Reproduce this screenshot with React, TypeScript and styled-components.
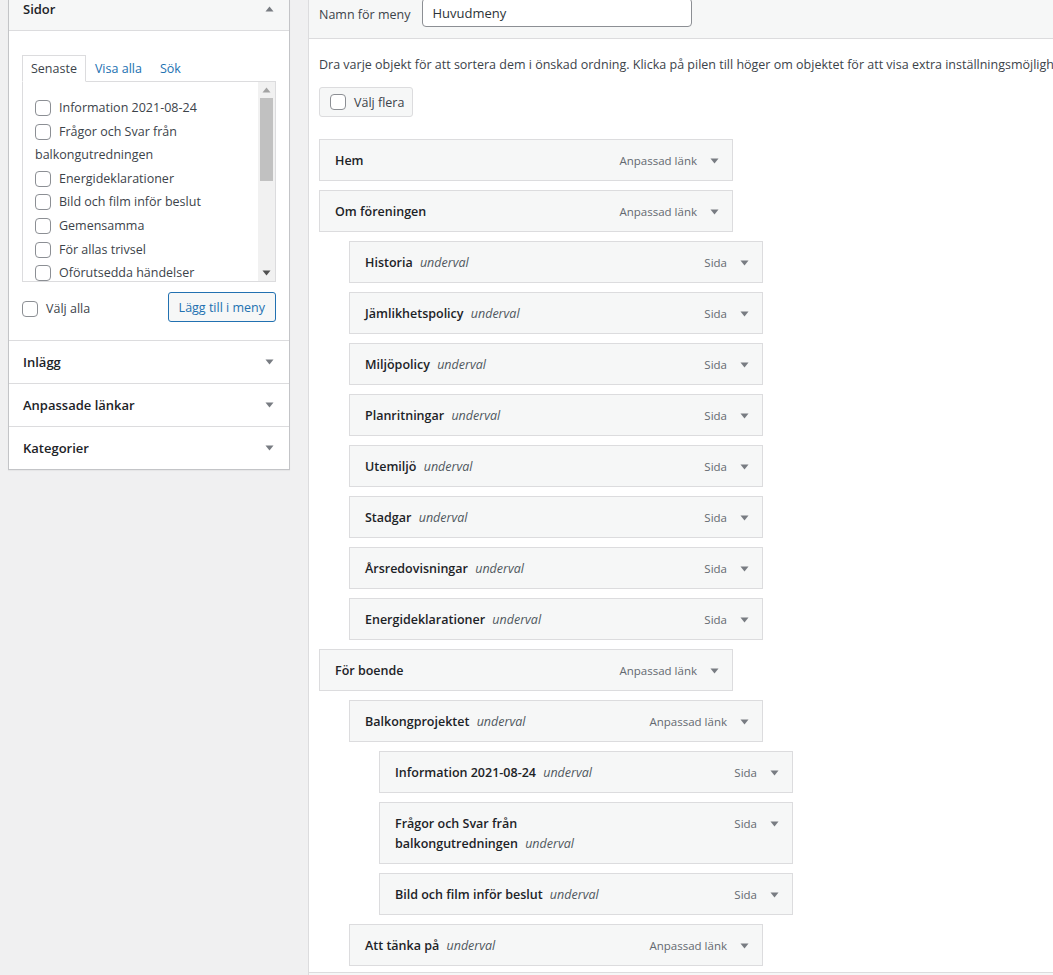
import React from "react";
import styled, { createGlobalStyle } from "styled-components";

const FONT = `"Open Sans", "Noto Sans", "Liberation Sans", sans-serif`;

const Global = createGlobalStyle`
  html, body { margin: 0; padding: 0; background: #f0f0f1; overflow: hidden; }
  body { font-family: ${FONT}; font-size: 12.5px; color: #3c434a; }
  * { box-sizing: border-box; }
`;

const Page = styled.div`
  display: flex;
  align-items: stretch;
  gap: 18px;
  padding-left: 8px;
  width: 1500px;
  min-height: 975px;
`;

const Sidebar = styled.div`
  flex: 0 0 282px;
  align-self: flex-start;
  background: #fff;
  border: 1px solid #c3c4c7;
  border-top: none;
  box-shadow: 0 1px 1px rgba(0, 0, 0, 0.04);
`;

const SectionHead = styled.div<{ $open?: boolean; $cut?: boolean }>`
  display: flex;
  align-items: ${(p) => (p.$cut ? "flex-start" : "center")};
  justify-content: space-between;
  height: ${(p) => (p.$cut ? 31 : 43)}px;
  padding: 0 14px;
  line-height: 18px;
  font-size: 13px;
  font-weight: 600;
  color: #1d2327;
  background: ${(p) => (p.$open ? "#f6f7f7" : "#fff")};
  border-top: ${(p) => (p.$cut ? "none" : "1px solid #dcdcde")};
  border-bottom: ${(p) => (p.$open ? "1px solid #dcdcde" : "none")};
`;

const ArrowBox = styled.span<{ $w: number }>`
  flex: 0 0 ${(p) => p.$w}px;
  height: 18px;
  display: flex;
  align-items: center;
  justify-content: center;
`;

const SectionBody = styled.div`
  padding: 24px 13px 18px;
`;

const Tabs = styled.div`
  display: flex;
  align-items: flex-end;
`;

const Tab = styled.span<{ $active?: boolean }>`
  position: relative;
  z-index: 1;
  padding: 4px 8px 3px;
  line-height: 18px;
  margin-bottom: -1px;
  color: ${(p) => (p.$active ? "#3c434a" : "#2271b1")};
  background: ${(p) => (p.$active ? "#fff" : "transparent")};
  border: 1px solid ${(p) => (p.$active ? "#dcdcde" : "transparent")};
  border-bottom-color: ${(p) => (p.$active ? "#fff" : "transparent")};
`;

const ListBox = styled.div`
  display: flex;
  height: 201px;
  border: 1px solid #dcdcde;
  background: #fff;
`;

const ListItems = styled.ul`
  flex: 1;
  margin: 0;
  list-style: none;
  overflow: hidden;
  padding: 14px 10px 0 12px;
  line-height: 23.6px;
`;

const ListItem = styled.li`
  margin: 0;
`;

const Check = styled.span`
  display: inline-block;
  width: 16px;
  height: 16px;
  border: 1px solid #8c8f94;
  border-radius: 4px;
  background: #fff;
  vertical-align: -4px;
  margin-right: 8px;
`;

const ScrollBar = styled.div`
  flex: 0 0 17px;
  display: flex;
  flex-direction: column;
  background: #f1f1f1;
`;

const ScrollBtn = styled.div`
  flex: 0 0 16px;
  display: flex;
  align-items: center;
  justify-content: center;
`;

const ScrollTrack = styled.div`
  flex: 1;
  padding: 0 2px;
`;

const Thumb = styled.div`
  height: 83px;
  background: #c1c1c1;
`;

const Actions = styled.div`
  display: flex;
  align-items: center;
  justify-content: space-between;
  margin-top: 10px;
`;

const CheckLabel = styled.label`
  display: flex;
  align-items: center;
  gap: 8px;
  margin-top: 3px;
  color: #3c434a;
`;

const PlainCheck = styled.span`
  width: 16px;
  height: 16px;
  border: 1px solid #8c8f94;
  border-radius: 4px;
  background: #fff;
`;

const AddButton = styled.button`
  height: 30px;
  padding: 0 10px;
  font-family: ${FONT};
  font-size: 12.5px;
  color: #2271b1;
  background: #f6f7f7;
  border: 1px solid #2271b1;
  border-radius: 3px;
`;

const Main = styled.div`
  flex: 0 0 1100px;
  display: flex;
  flex-direction: column;
  background: #fff;
  border-left: 1px solid #dcdcde;
`;

const MainHeader = styled.div`
  display: flex;
  align-items: flex-start;
  gap: 12px;
  height: 39px;
  padding: 0 10px;
  background: #f6f7f7;
  border-bottom: 1px solid #dcdcde;
`;

const HeaderLabel = styled.span`
  margin-top: 5px;
  line-height: 20px;
  color: #3c434a;
`;

const NameInput = styled.input`
  width: 270px;
  height: 29px;
  margin-top: -2px;
  padding: 1px 9px 0;
  font-family: ${FONT};
  font-size: 13px;
  color: #2c3338;
  background: #fff;
  border: 1px solid #8c8f94;
  border-radius: 4px;
  outline: none;
`;

const MainBody = styled.div`
  display: flex;
  flex-direction: column;
  align-items: flex-start;
  padding: 0 10px;
`;

const Description = styled.p`
  margin: 16px 0 0;
  line-height: 20px;
  white-space: nowrap;
  color: #3c434a;
`;

const BulkButton = styled.label`
  display: flex;
  align-items: center;
  gap: 8px;
  height: 30px;
  margin-top: 12px;
  padding: 0 8px 0 10px;
  background: #f6f7f7;
  border: 1px solid #dcdcde;
  border-radius: 3px;
  color: #3c434a;
`;

const MenuList = styled.div`
  display: flex;
  flex-direction: column;
  gap: 9px;
  margin-top: 22px;
  padding-bottom: 6px;
`;

const Item = styled.div<{ $depth: number }>`
  display: flex;
  align-items: flex-start;
  width: 414px;
  margin-left: ${(p) => p.$depth * 30}px;
  padding: 11px 0 9px 15px;
  line-height: 20px;
  background: #f6f7f7;
  border: 1px solid #dcdcde;
`;

const Title = styled.span`
  max-width: 213px;
  font-weight: 600;
  color: #1d2327;
`;

const Sub = styled.span`
  margin-left: 4px;
  font-style: italic;
  font-weight: 400;
  color: #50575e;
`;

const ItemType = styled.span`
  margin-left: auto;
  font-size: 11.5px;
  color: #646970;
`;

const ItemArrow = styled.span`
  flex: 0 0 35px;
  height: 19px;
  display: flex;
  align-items: center;
  justify-content: center;
`;

const Footer = styled.div`
  flex: 1;
  min-height: 20px;
  background: #f6f7f7;
  border-top: 1px solid #dcdcde;
`;

const Tri = ({ up, color = "#787c82" }: { up?: boolean; color?: string }) => (
  <svg width="9" height="6" viewBox="0 0 9 6">
    <polygon points={up ? "0.5,5.5 8.5,5.5 4.5,0.5" : "0.5,0.5 8.5,0.5 4.5,5.5"} fill={color} />
  </svg>
);

const pages = [
  "Information 2021-08-24",
  "Frågor och Svar från balkongutredningen",
  "Energideklarationer",
  "Bild och film inför beslut",
  "Gemensamma",
  "För allas trivsel",
  "Oförutsedda händelser",
];

type MenuEntry = { title: string; depth: number; type: string; sub?: boolean };

const menu: MenuEntry[] = [
  { title: "Hem", depth: 0, type: "Anpassad länk" },
  { title: "Om föreningen", depth: 0, type: "Anpassad länk" },
  { title: "Historia", depth: 1, type: "Sida", sub: true },
  { title: "Jämlikhetspolicy", depth: 1, type: "Sida", sub: true },
  { title: "Miljöpolicy", depth: 1, type: "Sida", sub: true },
  { title: "Planritningar", depth: 1, type: "Sida", sub: true },
  { title: "Utemiljö", depth: 1, type: "Sida", sub: true },
  { title: "Stadgar", depth: 1, type: "Sida", sub: true },
  { title: "Årsredovisningar", depth: 1, type: "Sida", sub: true },
  { title: "Energideklarationer", depth: 1, type: "Sida", sub: true },
  { title: "För boende", depth: 0, type: "Anpassad länk" },
  { title: "Balkongprojektet", depth: 1, type: "Anpassad länk", sub: true },
  { title: "Information 2021-08-24", depth: 2, type: "Sida", sub: true },
  { title: "Frågor och Svar från balkongutredningen", depth: 2, type: "Sida", sub: true },
  { title: "Bild och film inför beslut", depth: 2, type: "Sida", sub: true },
  { title: "Att tänka på", depth: 1, type: "Anpassad länk", sub: true },
];

export default function App() {
  return (
    <>
      <Global />
      <Page>
        <Sidebar>
          <SectionHead $open $cut>
            <span>Sidor</span>
            <ArrowBox $w={12}>
              <Tri up />
            </ArrowBox>
          </SectionHead>
          <SectionBody>
            <Tabs>
              <Tab $active>Senaste</Tab>
              <Tab>Visa alla</Tab>
              <Tab>Sök</Tab>
            </Tabs>
            <ListBox>
              <ListItems>
                {pages.map((p) => (
                  <ListItem key={p}>
                    <Check />
                    {p}
                  </ListItem>
                ))}
              </ListItems>
              <ScrollBar>
                <ScrollBtn>
                  <Tri up color="#a3a3a3" />
                </ScrollBtn>
                <ScrollTrack>
                  <Thumb />
                </ScrollTrack>
                <ScrollBtn>
                  <Tri color="#505050" />
                </ScrollBtn>
              </ScrollBar>
            </ListBox>
            <Actions>
              <CheckLabel>
                <PlainCheck />
                Välj alla
              </CheckLabel>
              <AddButton>Lägg till i meny</AddButton>
            </Actions>
          </SectionBody>
          {["Inlägg", "Anpassade länkar", "Kategorier"].map((s) => (
            <SectionHead key={s}>
              <span>{s}</span>
              <ArrowBox $w={12}>
                <Tri />
              </ArrowBox>
            </SectionHead>
          ))}
        </Sidebar>
        <Main>
          <MainHeader>
            <HeaderLabel>Namn för meny</HeaderLabel>
            <NameInput readOnly defaultValue="Huvudmeny" />
          </MainHeader>
          <MainBody>
            <Description>
              Dra varje objekt för att sortera dem i önskad ordning. Klicka på pilen till höger om objektet för
              att visa extra inställningsmöjligheter.
            </Description>
            <BulkButton>
              <PlainCheck />
              Välj flera
            </BulkButton>
            <MenuList>
              {menu.map((m) => (
                <Item key={m.title + m.depth} $depth={m.depth}>
                  <Title>
                    {m.title}
                    {m.sub && (
                      <>
                        {" "}
                        <Sub>underval</Sub>
                      </>
                    )}
                  </Title>
                  <ItemType>{m.type}</ItemType>
                  <ItemArrow>
                    <Tri />
                  </ItemArrow>
                </Item>
              ))}
            </MenuList>
          </MainBody>
          <Footer />
        </Main>
      </Page>
    </>
  );
}
